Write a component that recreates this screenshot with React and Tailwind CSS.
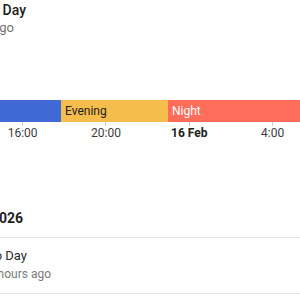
import React from "react";

const ticks = [
  { label: "16:00" },
  { label: "20:00" },
  { label: "16 Feb", bold: true },
  { label: "4:00" },
];

// right-anchored line: text that runs off the left edge of the crop
function Clip({ end, className, children }) {
  return (
    <div className={`flex justify-end whitespace-nowrap ${end} ${className}`}>
      <span>{children}</span>
    </div>
  );
}

export default function App() {
  return (
    <div
      className="w-[300px] h-[300px] overflow-hidden bg-white"
      style={{ fontFamily: "Roboto, 'Liberation Sans', sans-serif" }}
    >
      {/* header state */}
      <Clip end="w-[26px]" className="text-[14px] leading-[20px] font-medium text-[#212121]">
        Day
      </Clip>
      <Clip end="w-[14px]" className="text-[13px] leading-[16px] text-[#727272]">
        2 hours ago
      </Clip>

      {/* timeline */}
      <div className="mt-[64px] flex h-[22px] text-[12px] leading-[22px]">
        <div className="w-[61px] bg-[#4169d6]" />
        <div className="w-[107px] bg-[#f4bd4c] pl-[4px] text-[#212121]">Evening</div>
        <div className="flex-1 bg-[#ff6c5a] pl-[4px] text-white">Night</div>
      </div>
      <div className="flex -ml-[19px] text-[12px] leading-[14px] text-[#3c3c3c]">
        {ticks.map((t) => (
          <div key={t.label} className="w-[83.33px] shrink-0 flex flex-col items-center">
            <div className="w-px h-[4px] bg-[#cccccc]" />
            <div className={t.bold ? "font-bold text-[#212121]" : ""}>{t.label}</div>
          </div>
        ))}
      </div>

      {/* logbook */}
      <div className="mt-[68px]">
        <Clip end="w-[23px]" className="text-[14px] leading-[20px] font-bold text-[#1f1f1f]">
          16 February 2026
        </Clip>
        <div className="mt-[9px] border-t border-[#e3e3e3]" />
        <div className="pt-[9px] pb-[10px]">
          <Clip end="w-[27px]" className="text-[13px] leading-[18px] text-[#2b2b2b]">
            changed to Day
          </Clip>
          <Clip end="w-[51px]" className="text-[12px] leading-[18px] text-[#7a7a7a]">
            3 hours ago
          </Clip>
        </div>
        <div className="border-t border-[#e3e3e3]" />
      </div>
    </div>
  );
}
